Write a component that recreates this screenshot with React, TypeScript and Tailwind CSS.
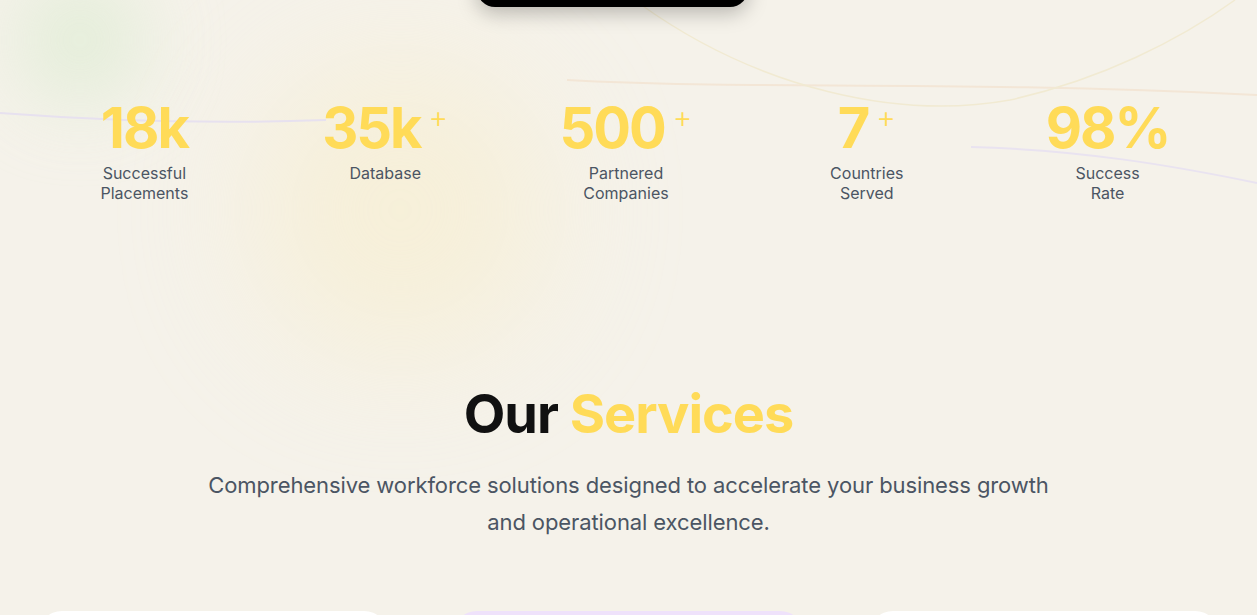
const stats = [
  { value: '18k', plus: false, label: ['Successful', 'Placements'] },
  { value: '35k', plus: true, label: ['Database'] },
  { value: '500', plus: true, label: ['Partnered', 'Companies'] },
  { value: '7', plus: true, label: ['Countries', 'Served'] },
  { value: '98%', plus: false, label: ['Success', 'Rate'] },
];

const Decorations = () => (
  <div className="pointer-events-none absolute inset-0 overflow-hidden">
    <div className="absolute left-[15px] top-[-25px] h-[130px] w-[130px] rounded-full bg-[#dcecd2] opacity-70 blur-2xl" />
    <div className="absolute left-[250px] top-[60px] h-[300px] w-[300px] rounded-full bg-[#f8edc8] opacity-50 blur-3xl" />
    <svg className="absolute inset-0" width="1257" height="615" fill="none">
      <path d="M0 113 C 120 122, 220 124, 326 120" stroke="#e7e1ef" strokeWidth="2" />
      <path d="M567 80 C 750 90, 950 80, 1257 95" stroke="#f3e6d6" strokeWidth="2" />
      <path d="M640 4 C 760 90, 900 120, 1010 100 C 1100 80, 1180 40, 1235 0" stroke="#f1ead2" strokeWidth="1.5" />
      <path d="M971 147 C 1080 150, 1170 165, 1257 183" stroke="#e9e3f0" strokeWidth="2" />
    </svg>
  </div>
);

const App = () => {
  return (
    <div className="relative h-[615px] overflow-hidden bg-[#f5f2ea] font-['Inter',sans-serif]">
      <Decorations />

      <div className="relative">
        <div className="ml-[477px] -mt-[50px] h-[57px] w-[271px] rounded-[18px] bg-black shadow-[0_6px_20px_rgba(0,0,0,0.25)]" />

        <section className="mt-[91px] pl-[24px] pr-[29px]">
          <div className="grid grid-cols-5">
            {stats.map((stat) => (
              <div key={stat.value} className="flex flex-col items-center text-center">
                <div className="flex items-start">
                  <span className="text-[56px] font-bold leading-[60px] tracking-[-2px] text-[#ffdb58]">
                    {stat.value}
                  </span>
                  {stat.plus && (
                    <span className="ml-[8px] mt-[4px] text-[30px] font-light leading-[30px] text-[#ffdb58]">
                      +
                    </span>
                  )}
                </div>
                <div className="mt-[5px] text-[16px] leading-[20px] text-[#4b5563]">
                  {stat.label.map((line) => (
                    <div key={line}>{line}</div>
                  ))}
                </div>
              </div>
            ))}
          </div>
        </section>

        <section className="mt-[179px] flex flex-col items-center text-center">
          <h2 className="text-[54px] font-bold leading-[64px] tracking-[-1px] text-[#111111]">
            Our <span className="text-[#ffdb58]">Services</span>
          </h2>
          <p className="mt-[21px] max-w-[860px] text-[22px] leading-[37px] tracking-[-0.1px] text-[#4b5563]">
            Comprehensive workforce solutions designed to accelerate your business growth
            and operational excellence.
          </p>
        </section>

        <div className="mt-[70px] grid grid-cols-3 gap-[65px] px-[38px]">
          <div className="h-[200px] rounded-[24px] bg-white" />
          <div className="h-[200px] rounded-[24px] bg-[#efe2fb]" />
          <div className="h-[200px] rounded-[24px] bg-white" />
        </div>
      </div>
    </div>
  );
};

export default App;
